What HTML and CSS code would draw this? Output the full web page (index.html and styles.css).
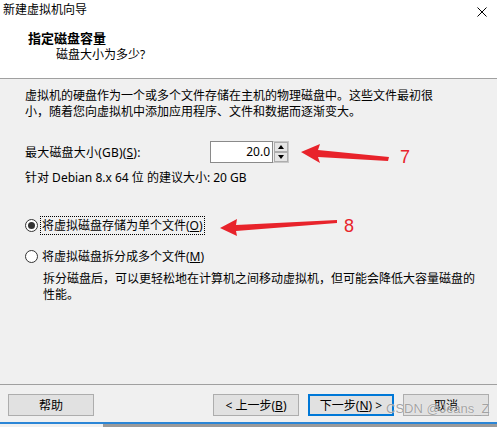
FILE: index.html
```html
<!DOCTYPE html>
<html lang="zh-CN">
<head>
	<meta charset="UTF-8">
	<title>新建虚拟机向导</title>
	<link rel="stylesheet" href="styles.css">
</head>
<body>
<div class="wizard">
	<div class="header">
		<div class="titlebar">
			<span class="title">新建虚拟机向导</span>
			<svg class="close" width="10" height="10" viewBox="0 0 10 10">
				<path d="M0.5 0.5 L9.5 9.5 M9.5 0.5 L0.5 9.5" stroke="#000" stroke-width="1" fill="none"/>
			</svg>
		</div>
		<div class="heading">指定磁盘容量</div>
		<div class="subheading">磁盘大小为多少?</div>
	</div>

	<div class="content">
		<p class="intro">虚拟机的硬盘作为一个或多个文件存储在主机的物理磁盘中。这些文件最初很<br>小，随着您向虚拟机中添加应用程序、文件和数据而逐渐变大。</p>

		<div class="size-row">
			<span class="size-label">最大磁盘大小(GB)(<u>S</u>):</span>
			<div class="spin">
				<div class="spin-value">20.0</div>
				<div class="spin-btns">
					<span class="spin-btn"><i class="tri up"></i></span>
					<span class="spin-btn"><i class="tri down"></i></span>
				</div>
			</div>
		</div>
		<p class="hint">针对 Debian 8.x 64 位 的建议大小: 20 GB</p>

		<div class="radio-row first">
			<span class="radio checked"></span>
			<span class="radio-text focus">将虚拟磁盘存储为单个文件(<u>O</u>)</span>
		</div>
		<div class="radio-row second">
			<span class="radio"></span>
			<span class="radio-text">将虚拟磁盘拆分成多个文件(<u>M</u>)</span>
		</div>
		<p class="desc">拆分磁盘后，可以更轻松地在计算机之间移动虚拟机，但可能会降低大容量磁盘的<br>性能。</p>
	</div>

	<div class="footer">
		<button class="btn">帮助</button>
		<div class="nav">
			<button class="btn">&lt; 上一步(<u>B</u>)</button>
			<button class="btn default">下一步(<u>N</u>) &gt;</button>
			<button class="btn">取消</button>
		</div>
	</div>
	<div class="edge"></div>
	<div class="desktop"></div>

	<!-- annotations drawn over the dialog -->
	<svg class="marks" width="497" height="427" viewBox="0 0 497 427">
		<polygon points="301,152 320,144 318,150 389,157 388,161 318,157 320,163" fill="#e8232b"/>
		<polygon points="220,228 237,219 236,225 337,220 337,223 236,231 237,236" fill="#e8232b"/>
	</svg>
	<span class="mark-no no7">7</span>
	<span class="mark-no no8">8</span>
	<span class="watermark">CSDN @Jeans_Z</span>
</div>
</body>
</html>
```

FILE: styles.css
```css
*{
	box-sizing: border-box;
}
body{
	margin: 0;
	background: #f0f0f0;
	font-family: "Noto Sans", "Noto Sans CJK SC", sans-serif;
	font-size: 12px;
	color: #000;
}
.wizard{
	position: relative;
	width: 497px;
	height: 427px;
	overflow: hidden;
}
.header{
	height: 79px;
	background: #fff;
	border-bottom: 1px solid #a0a0a0;
}
.titlebar{
	display: flex;
	justify-content: space-between;
	align-items: center;
	height: 20px;
	line-height: 20px;
	padding: 0 10px 0 3px;
}
.close{
	margin-top: 4px;
}
.heading{
	margin-top: 10px;
	padding-left: 28px;
	font-size: 13px;
	font-weight: 700;
	line-height: 16px;
}
.subheading{
	margin-top: 1px;
	padding-left: 56px;
	line-height: 16px;
}
.content{
	height: 305px;
	padding-left: 25px;
	padding-top: 9px;
}
p{
	margin: 0;
	line-height: 16px;
	white-space: nowrap;
}
.size-row{
	display: flex;
	align-items: center;
	margin-top: 21px;
	height: 22px;
}
.size-label{
	width: 185px;
	letter-spacing: 0.2px;
}
.spin{
	display: flex;
	height: 22px;
}
.spin-value{
	width: 63px;
	height: 22px;
	background: #fff;
	border: 1px solid #8a8a8a;
	text-align: right;
	padding-right: 2px;
	line-height: 20px;
}
.spin-btns{
	display: flex;
	flex-direction: column;
	justify-content: space-between;
	width: 16px;
	height: 22px;
	padding: 0 0 0 1px;
	border: 1px solid #c8c8c8;
	border-left: none;
	background: #f0f0f0;
}
.spin-btn{
	display: flex;
	align-items: center;
	justify-content: center;
	height: 10px;
	background: #e5e5e5;
	border: 1px solid #adadad;
}
.tri{
	width: 0;
	height: 0;
	border-left: 3.5px solid transparent;
	border-right: 3.5px solid transparent;
}
.tri.up{
	border-bottom: 4px solid #000;
}
.tri.down{
	border-top: 4px solid #000;
}
.hint{
	margin-top: 7px;
}
.radio-row{
	display: flex;
	align-items: center;
	height: 19px;
}
.radio-row.first{
	margin-top: 30px;
}
.radio-row.second{
	margin-top: 12px;
}
.radio{
	position: relative;
	width: 13px;
	height: 13px;
	border: 1px solid #333;
	border-radius: 50%;
	background: #fff;
	margin-right: 2px;
}
.radio.checked::after{
	content: "";
	position: absolute;
	left: 2px;
	top: 2px;
	width: 7px;
	height: 7px;
	border-radius: 50%;
	background: #333;
}
.radio-text{
	line-height: 17px;
	padding: 0 1px;
	border: 1px solid transparent;
}
.radio-text.focus{
	border: 1px dotted #000;
}
.desc{
	margin-top: 5px;
	padding-left: 18px;
}
.footer{
	display: flex;
	justify-content: space-between;
	height: 38px;
	padding: 9px 8px 0 8px;
	border-top: 1px solid #a0a0a0;
}
.nav{
	display: flex;
	gap: 9px;
}
.btn{
	width: 86px;
	height: 22px;
	padding: 0;
	font-family: inherit;
	font-size: 12px;
	color: #000;
	background: #e1e1e1;
	border: 1px solid #adadad;
}
.btn.default{
	border: 2px solid #0078d7;
}
.edge{
	height: 2px;
	background: #2b86d6;
}
.desktop{
	height: 3px;
	background: linear-gradient(to right, #f0f0f0 0, #f0f0f0 103px, #9a9a9a 103px);
}
.marks{
	position: absolute;
	left: 0;
	top: 0;
	pointer-events: none;
}
.mark-no{
	position: absolute;
	font-family: "Liberation Sans", sans-serif;
	font-size: 18px;
	line-height: 18px;
	color: #e8232b;
}
.no7{
	left: 400px;
	top: 148px;
}
.no8{
	left: 344px;
	top: 217px;
}
.watermark{
	position: absolute;
	left: 386px;
	top: 401px;
	font-family: "Liberation Sans", sans-serif;
	font-size: 13px;
	line-height: 16px;
	color: rgba(140, 140, 140, 0.8);
	text-shadow: 0 0 1px rgba(255, 255, 255, 0.9);
}
```
